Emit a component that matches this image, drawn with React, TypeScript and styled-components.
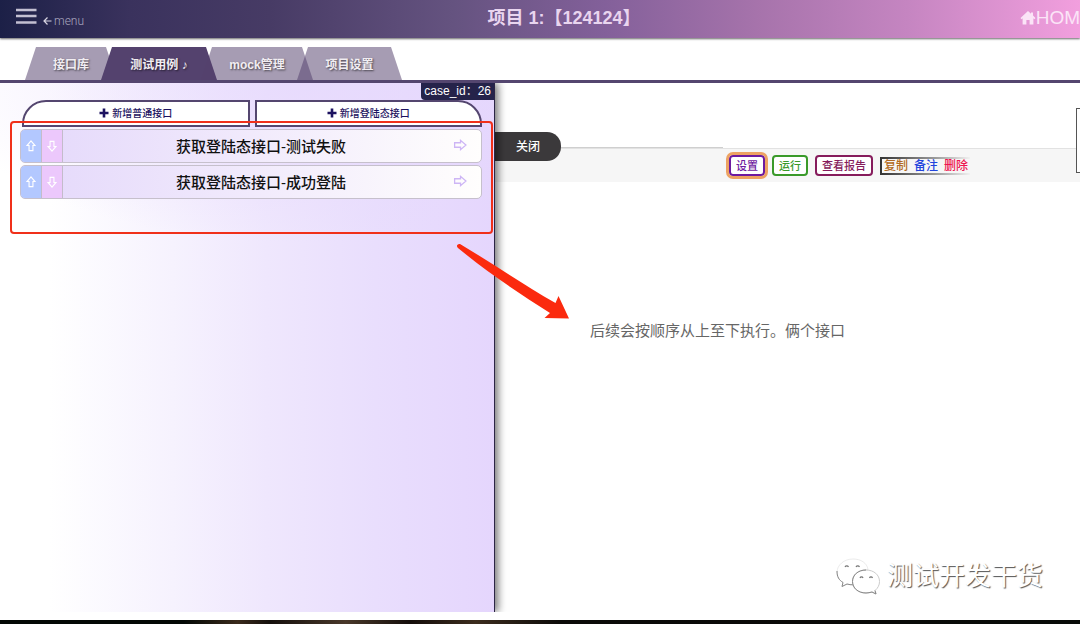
import React from "react";
import styled, { createGlobalStyle, css } from "styled-components";

const GlobalStyle = createGlobalStyle`
  * { box-sizing: border-box; }
  body {
    margin: 0;
    background: #fff;
    font-family: "Liberation Sans", "Noto Sans CJK SC", sans-serif;
  }
  button { font-family: inherit; cursor: pointer; }
  a { text-decoration: none; }
`;

const Page = styled.div`
  display: flex;
  flex-direction: column;
  min-height: 100vh;
  position: relative;
  overflow: hidden;
`;

const Header = styled.header`
  display: grid;
  grid-template-columns: 1fr auto 1fr;
  align-items: center;
  height: 38px;
  background: linear-gradient(to right, #1c2047 0%, #3a325d 12%, #473b65 25%, #655380 42%, #83609a 56%, #a673ab 70%, #c585c1 84%, #f29fde 100%);
  box-shadow: 0 1px 2px rgba(0, 0, 0, 0.6);
  position: relative;
`;

const MenuButton = styled.button`
  display: flex;
  align-items: center;
  gap: 6px;
  justify-self: start;
  padding: 0 0 4px 15px;
  border: 0;
  background: none;
  color: #c3c0d2;
`;

const MenuHint = styled.span`
  display: flex;
  align-items: center;
  gap: 2px;
  padding-top: 8px;
  color: #a9a5bd;
  font: 300 12px/16px Roboto, "Liberation Sans", sans-serif;
`;

const Title = styled.h1`
  margin: 0;
  padding: 0 0 2px 48px;
  color: #e9d5ef;
  font-size: 18px;
  line-height: 24px;
  font-weight: 700;
`;

const HomeLink = styled.a`
  display: flex;
  align-items: center;
  justify-self: end;
  padding-bottom: 2px;
  color: #fbe4f7;
  font-size: 19px;
  line-height: 24px;
`;

const TabBar = styled.nav`
  display: flex;
  padding: 9px 0 0 25px;
  border-bottom: 3px solid #54466f;
`;

const Tab = styled.button<{ $active?: boolean; $width: number }>`
  width: ${(p) => p.$width}px;
  height: 33px;
  padding: 0;
  border: 0;
  background: ${(p) => (p.$active ? "#54426e" : "rgba(84, 66, 110, 0.52)")};
  clip-path: polygon(11px 0, calc(100% - 11px) 0, 100% 100%, 0 100%);
  color: #f1edf2;
  font-size: 12px;
  font-weight: 700;
  text-shadow: 1px 1px 2px rgba(0, 0, 0, 0.6);
  & + & { margin-left: -16px; }
`;

const Main = styled.main`
  display: flex;
  flex: 1;
  margin-bottom: 8px;
  position: relative;
`;

const CasePanel = styled.section`
  flex: none;
  width: 495px;
  padding: 17px 12px 0 20px;
  border-right: 1px solid #2c2545;
  background:
    radial-gradient(ellipse 360px 160px at 300px 0, rgba(230, 216, 253, 0.75), rgba(230, 216, 253, 0)),
    linear-gradient(to right, #fff 10%, #f6f2fe 35%, #efe7fd 54%, #e9defd 76%, #e5d6fd 100%);
  box-shadow: 3px 0 8px rgba(0, 0, 0, 0.55);
  clip-path: inset(0 -16px 0 0);
  position: relative;
  z-index: 1;
`;

const CaseBadge = styled.span`
  position: absolute;
  top: 0;
  right: 0;
  padding: 0 3px;
  border-radius: 0 0 0 4px;
  background: #25234a;
  color: #fff;
  font-size: 12px;
  line-height: 17px;
`;

const AddRow = styled.div`
  display: grid;
  grid-template-columns: 1fr 1fr;
  gap: 5px;
  padding-left: 2px;
`;

const AddButton = styled.button<{ $side: "left" | "right" }>`
  display: flex;
  align-items: center;
  justify-content: center;
  gap: 3px;
  height: 27px;
  padding: 0 0 2px;
  border: 2px solid #54466f;
  border-radius: ${(p) => (p.$side === "left" ? "24px 0 0 0" : "0 24px 0 0")};
  background: #fff;
  color: #1c1260;
  font-size: 10px;
  font-weight: 500;
`;

const CaseList = styled.ul`
  display: grid;
  gap: 2px;
  margin: 2px 0 0;
  padding: 0;
  list-style: none;
`;

const CaseItem = styled.li`
  display: flex;
  height: 34px;
  border: 1px solid #c6c0cc;
  border-radius: 5px;
  overflow: hidden;
  background: linear-gradient(to right, #e4d8fb, #f1eafc 50%, #fffefd);
`;

const MoveButton = styled.button<{ $tone: string }>`
  display: grid;
  place-items: center;
  width: 21px;
  padding: 0;
  border: 0;
  border-right: 1px solid #c4bccb;
  background: ${(p) => p.$tone};
  color: #fff;
`;

const CaseName = styled.button`
  display: grid;
  grid-template-columns: 1fr auto;
  align-items: center;
  flex: 1;
  padding: 0 14px 2px 6px;
  border: 0;
  background: none;
  color: #111;
  font-size: 15px;
  font-weight: 500;
  svg { color: #cdb5f5; }
`;

const Workspace = styled.section`
  flex: 1;
  min-width: 0;
  padding-top: 64px;
  position: relative;
  overflow: hidden;
`;

const CloseButton = styled.button`
  position: absolute;
  top: 49px;
  left: 0;
  width: 66px;
  height: 29px;
  padding: 0 0 2px;
  border: 0;
  border-radius: 0 14px 14px 0;
  background: #3b393b;
  color: #fff;
  font-size: 12px;
  font-weight: 500;
`;

const Progress = styled.div`
  width: 228px;
  height: 2px;
  background: #cfcfcf;
`;

const Toolbar = styled.div`
  display: flex;
  align-items: center;
  gap: 7px;
  height: 34px;
  padding-left: 234px;
  border-top: 1px solid #e2e2e2;
  background: #f6f6f6;
  margin-top: -1px;
`;

const ActionButton = styled.button<{ $color: string; $focus?: boolean }>`
  height: 21px;
  padding: 0 5px;
  border: 2px solid ${(p) => p.$color};
  border-radius: 4px;
  background: #fff;
  color: ${(p) => p.$color};
  font-size: 11px;
  line-height: 16px;
  font-weight: 500;
  ${(p) => p.$focus && css`outline: 3px solid #eda263;`}
`;

const LinkGroup = styled.div`
  display: flex;
  gap: 6px;
  padding: 0 2px;
  border: 2px solid;
  border-image: linear-gradient(to right, #333, #9a9a9a 60%, transparent) 2;
  border-right: 0;
`;

const TextLink = styled.a<{ $color: string }>`
  color: ${(p) => p.$color};
  font-size: 12px;
  line-height: 14px;
  font-weight: 500;
`;

const SideBox = styled.textarea`
  position: absolute;
  top: 25px;
  right: -156px;
  width: 160px;
  height: 65px;
  border: 1px solid #555;
  background: #fff;
  resize: none;
`;

const Note = styled.p`
  margin: 138px 0 0;
  padding-left: 95px;
  color: #666;
  font-size: 15px;
  line-height: 22px;
`;

const Highlight = styled.div`
  position: absolute;
  top: 38px;
  left: 10px;
  width: 483px;
  height: 113px;
  border: 2px solid #f0301a;
  border-radius: 4px;
  pointer-events: none;
  z-index: 2;
`;

const Pointer = styled.svg`
  position: absolute;
  top: 157px;
  left: 450px;
  pointer-events: none;
  z-index: 2;
`;

const Watermark = styled.div`
  position: absolute;
  right: 37px;
  bottom: 16px;
  display: flex;
  align-items: center;
  gap: 7px;
  color: #fff;
  font-size: 26px;
  line-height: 40px;
  text-shadow: 1px 1px 1px #555;
`;

const Footer = styled.footer`
  height: 4px;
  background: linear-gradient(to right, #030805 0 17%, #3a2a1c 22%, #15100c 25%, #49382a 32%, #140d0a 38%, #3c2c1e 44%, #0b0a08 52%, #080b08 100%);
`;

const BlockArrow = ({ turn, size }: { turn: number; size: number }) => (
  <svg width={size} height={size} viewBox="0 0 13 13" fill="none" stroke="currentColor" strokeWidth="1.2" aria-hidden="true">
    <path d="M6.5 1 L10.8 6 H8.6 V11.5 H4.4 V6 H2.2 Z" transform={`rotate(${turn} 6.5 6.5)`} />
  </svg>
);

const Plus = () => (
  <svg width="10" height="10" viewBox="0 0 10 10" stroke="#1c1260" strokeWidth="2.6" aria-hidden="true">
    <path d="M5 0.5 V9.5 M0.5 5 H9.5" />
  </svg>
);

const tabs = [
  { label: "接口库", width: 92 },
  { label: "测试用例 ♪", width: 116, active: true },
  { label: "mock管理", width: 112 },
  { label: "项目设置", width: 105 },
];

const cases = ["获取登陆态接口-测试失败", "获取登陆态接口-成功登陆"];

export default function App() {
  return (
    <Page>
      <GlobalStyle />
      <Header>
        <MenuButton>
          <svg width="22" height="18" viewBox="0 0 22 18" stroke="currentColor" strokeWidth="2.4" aria-hidden="true">
            <path d="M1 2 H21.5 M1 8 H21.5 M1 14.500 H21.5" />
          </svg>
          <MenuHint>
            <svg width="9" height="8" viewBox="0 0 9 8" fill="none" stroke="#d8d5e2" strokeWidth="1.2" aria-hidden="true">
              <path d="M4.5 0.5 L1 4 L4.5 7.5 M1 4 H8.5" />
            </svg>
            menu
          </MenuHint>
        </MenuButton>
        <Title>项目 1:【124124】</Title>
        <HomeLink href="#home">
          <svg width="16" height="16" viewBox="0 0 16 16" fill="currentColor" aria-hidden="true">
            <path d="M8 1 L0.5 8 L1.6 9.2 L2.6 8.3 V14.5 H6.4 V10 H9.6 V14.5 H13.4 V8.3 L14.4 9.2 L15.5 8 L13 5.6 V2.5 H11 V3.8 Z" />
          </svg>
          HOM
        </HomeLink>
      </Header>
      <TabBar>
        {tabs.map((t) => (
          <Tab key={t.label} $width={t.width} $active={t.active}>{t.label}</Tab>
        ))}
      </TabBar>
      <Main>
        <CasePanel>
          <AddRow>
            <AddButton $side="left"><Plus />新增普通接口</AddButton>
            <AddButton $side="right"><Plus />新增登陆态接口</AddButton>
          </AddRow>
          <CaseBadge>case_id：26</CaseBadge>
          <CaseList>
            {cases.map((name) => (
              <CaseItem key={name}>
                <MoveButton $tone="#b3c8ff" aria-label="上移"><BlockArrow turn={0} size={12} /></MoveButton>
                <MoveButton $tone="#ecc8fc" aria-label="下移"><BlockArrow turn={180} size={12} /></MoveButton>
                <CaseName>
                  <span>{name}</span>
                  <BlockArrow turn={90} size={14} />
                </CaseName>
              </CaseItem>
            ))}
          </CaseList>
        </CasePanel>
        <Workspace>
          <Progress />
          <Toolbar>
            <ActionButton $color="#6d1aa0" $focus>设置</ActionButton>
            <ActionButton $color="#3a9a2a">运行</ActionButton>
            <ActionButton $color="#861c5c">查看报告</ActionButton>
            <LinkGroup>
              <TextLink href="#copy" $color="#b26a22">复制</TextLink>
              <TextLink href="#remark" $color="#2244dd">备注</TextLink>
              <TextLink href="#delete" $color="#ee1450">删除</TextLink>
            </LinkGroup>
          </Toolbar>
          <CloseButton>关闭</CloseButton>
          <SideBox aria-label="备注内容" />
          <Note>后续会按顺序从上至下执行。俩个接口</Note>
          <Watermark>
            <svg width="44" height="38" viewBox="0 0 44 38" fill="#fff" aria-hidden="true">
              <path d="M17 2 C8 2 1 8 1 15.500 C1 20 3 23 7 25.500 L6 29.500 L11 27 C13 27.500 15 28 17.500 27.800 C17 20 23 13 32 12.500 C31 6 25 2 17 2 Z" stroke="#ddd" strokeWidth="0.600" />
              <path d="M1 14 C1 20 3 23 7 25.500 L6 29.500 L11 27 C13 27.500 15 28 17.500 27.800" fill="none" stroke="#888" />
              <path d="M30 13 C22 13 16.500 18 16.500 24.500 C16.500 31 22 36 30 36 C32 36 34 35.500 36 35 L40 37 L39 33.500 C42 31 43.500 28 43.500 24.500 C43.500 18 38 13 30 13 Z" stroke="#ccc" />
              <path d="M30 13 C22 13 16.500 18 16.500 24.500 C16.500 31 22 36 30 36 C32 36 34 35.500 36 35 L40 37 L39 33.500" fill="none" stroke="#888" />
              <path d="M9 10 A2 2 0 0 1 12.500 10 M20 10 A2 2 0 0 1 23.500 10 M24 21 A1.600 1.600 0 0 1 27 21 M33.500 21 A1.600 1.600 0 0 1 36.500 21" fill="none" stroke="#777" strokeWidth="1.200" />
            </svg>
            测试开发干货
          </Watermark>
        </Workspace>
        <Highlight />
        <Pointer width="122" height="84" viewBox="0 0 122 84" aria-hidden="true">
          <path d="M10 4 C7 3.500 6 6.500 8 8 C36 31 68 53 100 73 L94.500 78 L119 78.500 L108.500 56 L105.500 63 C74 45 42 23 10 4 Z" fill="#fb2a0e" />
        </Pointer>
      </Main>
      <Footer />
    </Page>
  );
}
